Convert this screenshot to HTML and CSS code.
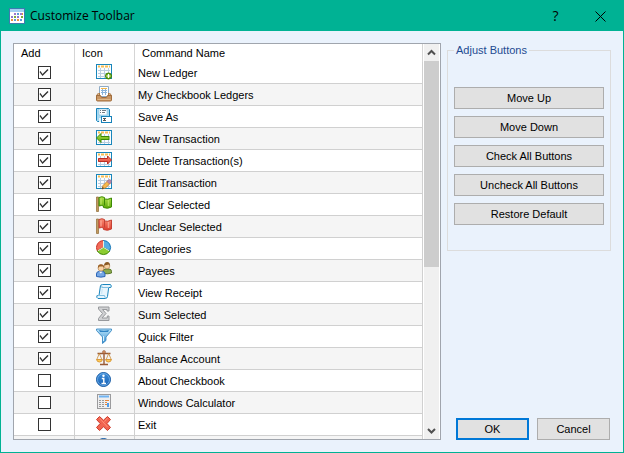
FILE: index.html
```html
<!DOCTYPE html>
<html lang="en">
<head>
<meta charset="utf-8">
<title>Customize Toolbar</title>
<link rel="stylesheet" href="styles.css">
</head>
<body>
<svg class="defs" aria-hidden="true">
  <defs>
    <linearGradient id="g-green" x1="0" y1="0" x2="0" y2="1"><stop offset="0" stop-color="#b4e34e"/><stop offset="1" stop-color="#5aa608"/></linearGradient>
    <linearGradient id="g-red" x1="0" y1="0" x2="0" y2="1"><stop offset="0" stop-color="#fb8d76"/><stop offset="1" stop-color="#dc3b2c"/></linearGradient>
    <linearGradient id="g-blue" x1="0" y1="0" x2="0" y2="1"><stop offset="0" stop-color="#b6e1f8"/><stop offset="1" stop-color="#3d94d4"/></linearGradient>
    <linearGradient id="g-info" x1="0" y1="0" x2="0" y2="1"><stop offset="0" stop-color="#3c8cd8"/><stop offset="1" stop-color="#1a62b4"/></linearGradient>
    <symbol id="grid" viewBox="0 0 16 16">
      <rect x=".5" y=".5" width="15" height="14" fill="#fbfdff" stroke="#1886bb"/>
      <path d="M2 6.500h12M2 9.500h12M2 12.500h12M4.500 4v10M8.500 4v10M12.500 4v10" stroke="#b9cde0"/>
      <path d="M2 2.500h2M5 2.500h3M9 2.500h3M13 2.500h1" stroke="#f8bd52" stroke-width="2"/>
    </symbol>
    <symbol id="flag" viewBox="0 0 16 16">
      <path d="M.5 1h2v14.500h-2z" fill="#c29a5f" stroke="#8e6a35" stroke-width=".7"/>
    </symbol>
  </defs>
</svg>
<div class="window">
  <header class="titlebar">
    <svg class="icon" viewBox="0 0 16 16"><rect x=".5" y=".5" width="15" height="15" fill="#fff" stroke="#3d7bb0"/><path d="M1 2.500h14" stroke="#a5d0f2" stroke-width="3"/><g stroke-width="2"><path d="M5 6h2M11 6h2" stroke="#9b79cc"/><path d="M8 6h2" stroke="#5b9bd8"/><path d="M13 6h1" stroke="#e8923c"/><path d="M2 9h2M8 9h2" stroke="#8f78cc"/><path d="M5 9h2M12 9h2" stroke="#79ac3c"/><path d="M2 12h2M8 12h2" stroke="#e8923c"/><path d="M5 12h2M11 12h2" stroke="#5b9bd8"/></g></svg>
    <h1 class="title">Customize Toolbar</h1>
    <button class="caption-button" type="button">?</button>
    <button class="caption-button" type="button" aria-label="Close"><svg class="close" viewBox="0 0 11 11"><path d="M.5.5l10 10M10.500.5l-10 10" stroke="#000"/></svg></button>
  </header>
  <main class="content">
    <section class="list">
      <div class="viewport">
        <table class="commands">
          <thead><tr><th class="col-add">Add</th><th class="col-icon">Icon</th><th class="col-name">Command Name</th></tr></thead>
          <tbody>
            <tr><td><input type="checkbox" id="c1" checked></td><td><svg class="icon" viewBox="0 0 16 16"><use href="#grid" width="16" height="16"/><circle cx="12.500" cy="12" r="3" fill="#6cac12" stroke="#3f8206"/><path d="M10.500 12h4M12.500 10v4" stroke="#fff" stroke-width="1.200"/></svg></td><td><label for="c1">New Ledger</label></td></tr>
            <tr><td><input type="checkbox" id="c2" checked></td><td><svg class="icon" viewBox="0 0 16 16"><path d="M3.500.5h9v10h-9z" fill="#fff" stroke="#8eabc6"/><path d="M5 2.500h6" stroke="#f5b549"/><path d="M5 4.500h6M5 6.500h6M6.500 3v6M9.500 3v6" stroke="#8bb5db"/><path d="M2.500 7L.5 9.500h3V7M13.500 7l2 2.500h-3V7" fill="#dcb78a" stroke="#a9794a"/><path d="M.5 9.500h4l1 2h5l1-2h4v4.500q0 1-1 1h-13q-1 0-1-1z" fill="#c99562" stroke="#a06d3c"/><path d="M1.500 13.500h13" stroke="#e0b888"/></svg></td><td><label for="c2">My Checkbook Ledgers</label></td></tr>
            <tr><td><input type="checkbox" id="c3" checked></td><td><svg class="icon" viewBox="0 0 16 16"><path d="M.5.5h12l1 1v12h-12l-1-1z" fill="#a8d9f1" stroke="#1681b9"/><path d="M3 1h8v6H3z" fill="#fff" stroke="#7fbfe0" stroke-width=".6"/><path d="M4 2.500h1M6 2.500h4M4 4.500h1M6 4.500h3" stroke="#707b85"/><path d="M3 10h3v4H3z" fill="#e4f4fc"/><rect x="5.500" y="8.500" width="10" height="6" fill="#fff" stroke="#1681b9"/><path d="M7 10.500h3M7 12.500h3M8.500 10v3" stroke="#555"/></svg></td><td><label for="c3">Save As</label></td></tr>
            <tr><td><input type="checkbox" id="c4" checked></td><td><svg class="icon" viewBox="0 0 16 16"><use href="#grid" width="16" height="16"/><path d="M.5 8L5 3.500v3h8v3H5v3z" fill="url(#g-green)" stroke="#3c8a04"/></svg></td><td><label for="c4">New Transaction</label></td></tr>
            <tr><td><input type="checkbox" id="c5" checked></td><td><svg class="icon" viewBox="0 0 16 16"><use href="#grid" width="16" height="16"/><path d="M15.500 8L11.500 4v2.500h-9v3h9V12z" fill="url(#g-red)" stroke="#bd2d21"/></svg></td><td><label for="c5">Delete Transaction(s)</label></td></tr>
            <tr><td><input type="checkbox" id="c6" checked></td><td><svg class="icon" viewBox="0 0 16 16"><use href="#grid" width="16" height="16"/><path d="M6 15l1-3.500 5-5 2.500 2.500-5 5z" fill="#f7b94d" stroke="#be762a" stroke-width=".8"/><path d="M11 7.500l1.500-1.500q1-1 2.300.2 1.100 1.200.2 2.300L13.500 10z" fill="#b58bad" stroke="#a3627f" stroke-width=".6"/><path d="M6 15l.7-2 1.300 1.300z" fill="#333"/></svg></td><td><label for="c6">Edit Transaction</label></td></tr>
            <tr><td><input type="checkbox" id="c7" checked></td><td><svg class="icon" viewBox="0 0 16 16"><use href="#flag" width="16" height="16"/><path d="M3 1.500q3-1.500 5.500 0V3q3 1 7-1v9q-4 2.300-8 .5V10q-2-1-4.500 0z" fill="url(#g-green)" stroke="#3c8a04"/><path d="M5 2.500v6M12.500 4v6" stroke="#c4ed6b" stroke-width="1.500" opacity=".7"/><path d="M8.500 3v6.500" stroke="#3c8a04"/></svg></td><td><label for="c7">Clear Selected</label></td></tr>
            <tr><td><input type="checkbox" id="c8" checked></td><td><svg class="icon" viewBox="0 0 16 16"><use href="#flag" width="16" height="16"/><path d="M3 1.500q3-1.500 5.500 0V3q3 1 7-1v9q-4 2.300-8 .5V10q-2-1-4.500 0z" fill="url(#g-red)" stroke="#c54235"/><path d="M5 2.500v6M12.500 4v6" stroke="#ffb5a2" stroke-width="1.500" opacity=".7"/><path d="M8.500 3v6.500" stroke="#c54235"/></svg></td><td><label for="c8">Unclear Selected</label></td></tr>
            <tr><td><input type="checkbox" id="c9" checked></td><td><svg class="icon" viewBox="0 0 16 16"><path d="M7.500 7.500V.5A7 7 0 0 0 1.400 11z" fill="#f26a59" stroke="#c8392c"/><path d="M7.500 7.500V.5a7 7 0 0 1 6.100 10.500z" fill="#55ade5" stroke="#1776b5"/><path d="M7.500 7.500L1.400 11a7 7 0 0 0 12.200 0z" fill="#8ccc30" stroke="#438a0a"/><path d="M7.500 1v6.500L2 10.700M7.500 7.500l5.500 3.200" fill="none" stroke="#e6f3df"/></svg></td><td><label for="c9">Categories</label></td></tr>
            <tr><td><input type="checkbox" id="c10" checked></td><td><svg class="icon" viewBox="0 0 16 16"><path d="M7 10V9q0-2 3-2h3q2.500 0 2.500 2.500V11q-3 1.300-8.500.5z" fill="#8daa4c" stroke="#58772a"/><circle cx="11" cy="4" r="2.800" fill="#f6d1a1" stroke="#a87543" stroke-width=".6"/><path d="M8.200 3.500q0-3.500 3-3.500t2.800 4l-1-1.500z" fill="#8a5a24"/><path d="M.5 14.500V12q0-2.500 2.500-2.500h3.500q2.500 0 2.500 2.500v2.500q-4 1.300-8.500 0z" fill="#75a7e5" stroke="#2c65b5"/><path d="M3 9.500l1.800 2 1.700-2z" fill="#fff"/><circle cx="5" cy="6" r="3" fill="#f9d3a4" stroke="#a87543" stroke-width=".6"/><path d="M2 6q-.5-3.700 3-3.700T8 6L7 4.500H3.500z" fill="#9a6026"/></svg></td><td><label for="c10">Payees</label></td></tr>
            <tr><td><input type="checkbox" id="c11" checked></td><td><svg class="icon" viewBox="0 0 16 16"><path d="M4.500 1.500q.5-1 2-1h8q1.500 1.500.3 3H12.700l-1.200 9q-.5 2-2 2H2q-2-1-1-3h2z" fill="#e8f5fd" stroke="#1b86be"/><path d="M5 .8q1.500 1 .8 2.700h7M1.500 11.500h7q.2 2 1.500 2.800" fill="none" stroke="#7fbfe0"/><path d="M6.300 5l-.8 5" stroke="#cfe8f6" stroke-width="1.500"/></svg></td><td><label for="c11">View Receipt</label></td></tr>
            <tr><td><input type="checkbox" id="c12" checked></td><td><svg class="icon" viewBox="0 0 16 16"><path d="M2.500 1h10.500v4h-2V3.500H6.500L10 7.500 6 12h5.300v-2H13v4.500H2.500v-2l4-5-4-4.500z" fill="#d0d1d3" stroke="#97999c"/></svg></td><td><label for="c12">Sum Selected</label></td></tr>
            <tr><td><input type="checkbox" id="c13" checked></td><td><svg class="icon" viewBox="0 0 16 16"><path d="M.5 1h15v1.500L10 9v3.500L6.500 15.500V9L.5 2.500z" fill="url(#g-blue)" stroke="#2b7fbd" stroke-width=".8"/><path d="M3 2q5 1.500 10 0l-1 2H4z" fill="#2d82c4"/><path d="M7.500 8v5" stroke="#d9f1fd"/></svg></td><td><label for="c13">Quick Filter</label></td></tr>
            <tr><td><input type="checkbox" id="c14" checked></td><td><svg class="icon" viewBox="0 0 16 16"><path d="M8 1v13M1.500 3.500h13M4 14.500h8" fill="none" stroke="#9a5b35" stroke-width="1.400"/><circle cx="8" cy="2" r="1.500" fill="#d59165" stroke="#8d512d" stroke-width=".5"/><path d="M3.300 3.500L.8 9.500M3.300 3.500l2.500 6M12.700 3.500l-2.500 6M12.700 3.500l2.500 6" stroke="#c98b39" stroke-width=".8"/><path d="M.5 9.500h6Q6 12 3.500 12T.5 9.500zM9.500 9.500h6q-.5 2.500-3 2.500t-3-2.500z" fill="#ffcb57" stroke="#d18a24" stroke-width=".8"/></svg></td><td><label for="c14">Balance Account</label></td></tr>
            <tr><td><input type="checkbox" id="c15"></td><td><svg class="icon" viewBox="0 0 16 16"><circle cx="7.500" cy="7.500" r="7" fill="url(#g-info)" stroke="#195ca5"/><circle cx="7.500" cy="7.500" r="6" fill="none" stroke="#72b2eb" stroke-width=".8"/><circle cx="7.500" cy="3.700" r="1.200" fill="#fff"/><path d="M5.800 6.500h2v5M5.500 11.500h4.500" fill="none" stroke="#fff" stroke-width="1.400"/></svg></td><td><label for="c15">About Checkbook</label></td></tr>
            <tr><td><input type="checkbox" id="c16"></td><td><svg class="icon" viewBox="0 0 16 16"><rect x="1.500" y=".5" width="13" height="14" fill="#eeeeef" stroke="#9b9b9d"/><path d="M3 2.500h10" stroke="#70b4f2" stroke-width="2"/><g stroke-dasharray="2 1"><path d="M3 6.500h6M3 8.500h6M3 10.500h6M3 12.500h6" stroke="#999"/><path d="M9 6.500h2M9 8.500h2M9 10.500h2" stroke="#e7863c"/></g><path d="M11 6.500h2" stroke="#e7863c"/><path d="M12 9v4" stroke="#4d9ef0" stroke-width="2"/></svg></td><td><label for="c16">Windows Calculator</label></td></tr>
            <tr><td><input type="checkbox" id="c17"></td><td><svg class="icon" viewBox="0 0 16 16"><path d="M3.500.5L7.500 4.200l4-3.700 3 3L11 7.500l3.500 4-3 3-4-3.700-4 3.700-3-3 3.700-4L.5 3.500z" fill="#f16450" stroke="#cd3c2d" stroke-linejoin="round"/><path d="M3.500 2l8 9M11.500 2l-3 3.500" stroke="#ff8d76"/></svg></td><td><label for="c17">Exit</label></td></tr>
            <tr><td></td><td><svg class="icon" viewBox="0 0 16 16"><circle cx="7.500" cy="7.500" r="7" fill="url(#g-info)" stroke="#195ca5"/></svg></td><td></td></tr>
          </tbody>
        </table>
      </div>
      <div class="scrollbar">
        <svg class="arrow" viewBox="0 0 15 17"><path d="M4 10.500l3.500-3.500 3.500 3.500" fill="none" stroke="#505050" stroke-width="2"/></svg>
        <div class="track"><div class="thumb"></div></div>
        <svg class="arrow" viewBox="0 0 15 17"><path d="M4 7l3.500 3.500L11 7" fill="none" stroke="#505050" stroke-width="2"/></svg>
      </div>
    </section>
    <aside class="side">
      <fieldset class="group">
        <legend>Adjust Buttons</legend>
        <button class="button" type="button">Move Up</button>
        <button class="button" type="button">Move Down</button>
        <button class="button" type="button">Check All Buttons</button>
        <button class="button" type="button">Uncheck All Buttons</button>
        <button class="button" type="button">Restore Default</button>
      </fieldset>
      <div class="actions">
        <button class="button primary" type="submit">OK</button>
        <button class="button" type="button">Cancel</button>
      </div>
    </aside>
  </main>
</div>
</body>
</html>
```
FILE: styles.css
```css
* { box-sizing: border-box; }

body {
  margin: 0;
  font: 11px/14px "Liberation Sans", Arial, sans-serif;
  color: #000;
}

button { font: inherit; color: inherit; }

.defs { position: absolute; width: 0; height: 0; }

.window {
  display: flex;
  flex-direction: column;
  height: 100vh;
  border: 1px solid #00b294;
  background: #eaf2fc;
}

.titlebar {
  display: flex;
  align-items: center;
  flex: none;
  height: 30px;
  padding-left: 8px;
  background: #00b294;
}

.icon { display: block; width: 16px; height: 16px; }

.title {
  flex: 1;
  margin: 0 0 0 5px;
  font: 12px/16px "Open Sans", "Segoe UI", sans-serif;
}

.caption-button {
  display: flex;
  align-items: center;
  justify-content: center;
  width: 45px;
  height: 30px;
  padding: 0;
  border: 0;
  background: none;
  font: 14px/16px "Open Sans", "Segoe UI", sans-serif;
}

.close { width: 11px; height: 11px; }

.content {
  display: flex;
  flex: 1;
  min-height: 0;
  padding: 12px;
  gap: 6px;
}

.list {
  display: flex;
  flex: 1;
  min-width: 0;
  border: 1px solid #a0a5ad;
  background: #fff;
}

.viewport { flex: 1; min-width: 0; overflow: hidden; }

.commands {
  width: 100%;
  table-layout: fixed;
  border-collapse: separate;
  border-spacing: 0;
}

.commands th {
  height: 18px;
  padding: 0 7px;
  border-right: 1px solid #d5d5d5;
  font-weight: normal;
  text-align: left;
}

.commands td {
  height: 22px;
  padding: 0 3px;
  border-right: 1px solid #d0d0d0;
  border-bottom: 1px solid #d0d0d0;
}

.commands td:nth-child(2) { padding: 0 4px 2px 3px; }

.commands tr:nth-child(even) td { background: #f5f5f5; }

.col-add { width: 61px; }
.col-icon { width: 60px; }

.commands td .icon { margin: 0 auto; }

.commands input {
  appearance: none;
  display: block;
  width: 13px;
  height: 13px;
  margin: 0 auto;
  border: 1px solid #333;
  background: #fff;
}

.commands input:checked::before {
  content: "";
  display: block;
  width: 11px;
  height: 11px;
  background: #333;
  clip-path: polygon(1px 5px, 2px 4px, 4px 7px, 9px 2px, 10px 3px, 4px 9px);
}

.scrollbar {
  display: flex;
  flex-direction: column;
  width: 17px;
  border: solid #fff;
  border-width: 0 1px;
  background: #f0f0f0;
}

.arrow { flex: none; width: 15px; height: 17px; }
.track { flex: 1; }
.thumb { height: 57%; background: #cdcdcd; }

.side {
  display: flex;
  flex-direction: column;
  justify-content: space-between;
  width: 164px;
}

.group {
  display: flex;
  flex-direction: column;
  gap: 7px;
  min-width: 0;
  height: 208px;
  margin: 0;
  padding: 30px 6px 0;
  border: 1px solid #dcdcdc;
}

.group legend { padding: 0 2px; color: #1e4a91; }

.button {
  height: 22px;
  padding: 0;
  border: 1px solid #adadad;
  background: #e1e1e1;
}

.actions { display: grid; grid-template-columns: 1fr 1fr; gap: 8px; padding: 0 1px 0 9px; }
.actions .primary { border: 2px solid #0078d7; }
```
